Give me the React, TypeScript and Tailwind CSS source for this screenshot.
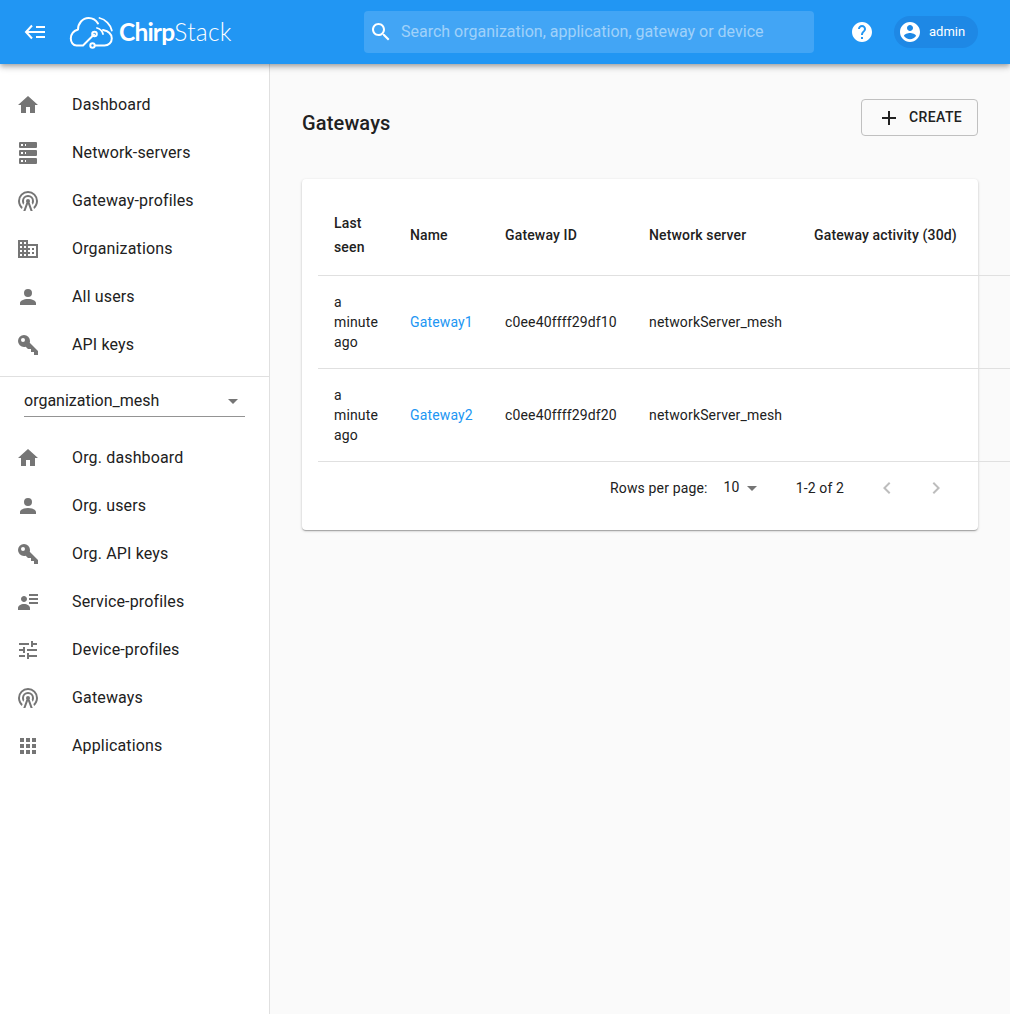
import React from "react";

const P = ({ d, s = 24, c = "" }: { d: string; s?: number; c?: string }) => (
  <svg width={s} height={s} viewBox="0 0 24 24" fill="currentColor" className={c}><path d={d} /></svg>
);

const I = {
  home: "M10,20V14H14V20H19V12H22L12,3L2,12H5V20H10Z",
  server: "M4,1H20A1,1 0 0,1 21,2V6A1,1 0 0,1 20,7H4A1,1 0 0,1 3,6V2A1,1 0 0,1 4,1M4,9H20A1,1 0 0,1 21,10V14A1,1 0 0,1 20,15H4A1,1 0 0,1 3,14V10A1,1 0 0,1 4,9M4,17H20A1,1 0 0,1 21,18V22A1,1 0 0,1 20,23H4A1,1 0 0,1 3,22V18A1,1 0 0,1 4,17M9,5H10V3H9V5M9,13H10V11H9V13M9,21H10V19H9V21M5,3V5H7V3H5M5,11V13H7V11H5M5,19V21H7V19H5Z",
  radio: "M12,10A2,2 0 0,1 14,12C14,12.5 13.82,12.94 13.53,13.29L16.7,22H14.57L12,14.93L9.43,22H7.3L10.47,13.29C10.18,12.94 10,12.5 10,12A2,2 0 0,1 12,10M12,8A4,4 0 0,0 8,12C8,12.5 8.1,13 8.28,13.46L7.4,15.86C6.53,14.81 6,13.47 6,12A6,6 0 0,1 12,6A6,6 0 0,1 18,12C18,13.47 17.47,14.81 16.6,15.86L15.72,13.46C15.9,13 16,12.5 16,12A4,4 0 0,0 12,8M12,4A8,8 0 0,0 4,12C4,14.36 5,16.5 6.64,17.94L5.92,19.94C3.54,18.11 2,15.23 2,12A10,10 0 0,1 12,2A10,10 0 0,1 22,12C22,15.23 20.46,18.11 18.08,19.94L17.36,17.94C19,16.5 20,14.36 20,12A8,8 0 0,0 12,4Z",
  domain: "M18,15H16V17H18M18,11H16V13H18M20,19H12V17H14V15H12V13H14V11H12V9H20M10,7H8V5H10M10,11H8V9H10M10,15H8V13H10M10,19H8V17H10M6,7H4V5H6M6,11H4V9H6M6,15H4V13H6M6,19H4V17H6M12,7V3H2V21H22V7H12Z",
  person: "M12,4A4,4 0 0,1 16,8A4,4 0 0,1 12,12A4,4 0 0,1 8,8A4,4 0 0,1 12,4M12,14C16.42,14 20,15.79 20,18V20H4V18C4,15.79 7.58,14 12,14Z",
  key: "M22,18V22H18V19H15V16H12L9.74,13.74C9.19,13.91 8.61,14 8,14A6,6 0 0,1 2,8A6,6 0 0,1 8,2A6,6 0 0,1 14,8C14,8.61 13.91,9.19 13.74,9.74L22,18M7,5A2,2 0 0,0 5,7A2,2 0 0,0 7,9A2,2 0 0,0 9,7A2,2 0 0,0 7,5Z",
  profiles: "M11,9C11,10.66 9.66,12 8,12C6.34,12 5,10.66 5,9C5,7.34 6.34,6 8,6C9.66,6 11,7.34 11,9M14,20H2V18C2,15.79 4.69,14 8,14C11.31,14 14,15.79 14,18V20M22,12V14H13V12H22M22,8V10H13V8H22M22,4V6H13V4H22Z",
  tune: "M3,17V19H9V17H3M3,5V7H13V5H3M13,21V19H21V17H13V15H11V21H13M7,9V11H3V13H7V15H9V9H7M21,13V11H11V13H21M15,9H17V7H21V5H17V3H15V9Z",
  apps: "M4 8h4V4H4v4zm6 12h4v-4h-4v4zm-6 0h4v-4H4v4zm0-6h4v-4H4v4zm6 0h4v-4h-4v4zm6-10v4h4V4h-4zm-6 4h4V4h-4v4zm6 6h4v-4h-4v4zm0 6h4v-4h-4v4z",
  search: "M15.5 14h-.79l-.28-.27C15.41 12.59 16 11.11 16 9.5 16 5.91 13.09 3 9.5 3S3 5.91 3 9.5 5.91 16 9.5 16c1.61 0 3.09-.59 4.23-1.57l.27.28v.79l5 4.99L20.49 19l-4.99-5zm-6 0C7.01 14 5 11.99 5 9.5S7.01 5 9.5 5 14 7.01 14 9.5 11.99 14 9.5 14z",
  help: "M12 2C6.48 2 2 6.48 2 12s4.48 10 10 10 10-4.48 10-10S17.52 2 12 2zm1 17h-2v-2h2v2zm2.07-7.75l-.9.92C13.45 12.9 13 13.5 13 15h-2v-.5c0-1.1.45-2.1 1.17-2.83l1.24-1.26c.37-.36.59-.86.59-1.41 0-1.1-.9-2-2-2s-2 .9-2 2H8c0-2.21 1.79-4 4-4s4 1.79 4 4c0 .88-.36 1.68-.93 2.25z",
  account: "M12 2C6.48 2 2 6.48 2 12s4.48 10 10 10 10-4.48 10-10S17.52 2 12 2zm0 3c1.66 0 3 1.34 3 3s-1.34 3-3 3-3-1.34-3-3 1.34-3 3-3zm0 14.2c-2.5 0-4.71-1.28-6-3.22.03-1.99 4-3.08 6-3.08 1.99 0 5.97 1.09 6 3.08-1.29 1.94-3.5 3.22-6 3.22z",
  plus: "M19 13h-6v6h-2v-6H5v-2h6V5h2v6h6v2z",
  drop: "M7 10l5 5 5-5z",
  left: "M15.41 7.41L14 6l-6 6 6 6 1.41-1.41L10.83 12z",
  right: "M10 6L8.59 7.41 13.17 12l-4.58 4.59L10 18l6-6z",
};

const MenuBack = () => (
  <svg width="24" height="24" viewBox="0 0 24 24" fill="none" stroke="#fff" strokeWidth="2" className="shrink-0">
    <path d="M8 5.500 2 12 8 18.500" />
    <path d="M3 12H21M12 7H21M12 17H21" />
  </svg>
);

const Nav = ({ d, label }: { d: string; label: string }) => (
  <div className="flex h-12 items-center pl-4 text-[#212121]">
    <span className="flex w-14 shrink-0 text-[#757575]"><P d={d} /></span>
    <span className="text-base leading-6 tracking-[0.15px]">{label}</span>
  </div>
);

const Logo = () => (
  <div className="flex items-center">
    <svg width="48" height="36" viewBox="68 10 48 36" fill="none" stroke="#fff" strokeWidth="2" strokeLinecap="round" strokeLinejoin="round" className="shrink-0">
      <path d="M94 30.500 83 41.500H76.500C73 41.500 70.800 38 70.800 34.500 70.800 30.500 73.500 27 78 25.500 78 19.500 82.500 14 88.500 14 92.500 14 96 16 98 19.500" />
      <path d="M103 26C108 27 111.800 30 111.800 34.500 111.800 38.500 108.500 41.500 104.500 41.500H95" />
      <circle cx="94.500" cy="30" r="2.300" />
      <circle cx="92.500" cy="41.500" r="2.200" />
      <path d="M97 24C100 24.800 102.300 27 103 30" strokeWidth="1.800" />
      <path d="M99.500 14C105.500 15.500 110.500 20.500 111.800 26.500" strokeWidth="1.800" />
    </svg>
    <span className="ml-[3px] text-[24.5px] leading-none text-white [font-family:Lato,sans-serif]">
      <span className="font-bold tracking-[-0.8px]">Chirp</span>
      <span className="font-light tracking-[0.3px]">Stack</span>
    </span>
  </div>
);

const Row = ({ name, id }: { name: string; id: string }) => (
  <tr className="h-[93px] border-b border-[#e0e0e0] text-[#212121]">
    <td className="pl-4 pr-8 leading-5">a minute ago</td>
    <td className="text-[#2196f3]">{name}</td>
    <td>{id}</td>
    <td>networkServer_mesh</td>
    <td />
  </tr>
);

export default function App() {
  return (
    <div className="relative flex min-h-[1014px] flex-col overflow-hidden bg-[#fafafa] text-sm tracking-[0.15px] [font-family:Roboto,sans-serif]">
      <header className="relative z-10 flex h-16 shrink-0 items-center bg-[#2196f3] pl-6 pr-8 shadow-[0_2px_4px_-1px_rgba(0,0,0,0.2),0_4px_5px_0_rgba(0,0,0,0.14),0_1px_10px_0_rgba(0,0,0,0.12)]">
        <MenuBack />
        <div className="ml-5 w-[296px]"><Logo /></div>
        <div className="flex h-[42px] w-[450px] items-center rounded bg-[#42a5f5] pl-[5px]">
          <P d={I.search} c="text-white" />
          <span className="ml-2 text-base leading-6 tracking-normal text-white/50">Search organization, application, gateway or device</span>
        </div>
        <P d={I.help} c="ml-9 text-white" />
        <div className="ml-5 flex h-8 w-[84px] items-center rounded-2xl bg-[#1e88e5] pl-1">
          <P d={I.account} c="text-white" />
          <span className="ml-[7px] text-[13px] tracking-normal text-white">admin</span>
        </div>
      </header>
      <div className="flex flex-1">
        <aside className="w-[270px] shrink-0 border-r border-[#e0e0e0] bg-white pt-[17px]">
          <Nav d={I.home} label="Dashboard" />
          <Nav d={I.server} label="Network-servers" />
          <Nav d={I.radio} label="Gateway-profiles" />
          <Nav d={I.domain} label="Organizations" />
          <Nav d={I.person} label="All users" />
          <Nav d={I.key} label="API keys" />
          <div className="mt-[7px] border-t border-[#e0e0e0] px-6 pb-[17px] pt-[8px]">
            <div className="flex h-8 items-center justify-between border-b border-[#949494] text-base tracking-normal text-[#212121]">
              <span>organization_mesh</span>
              <P d={I.drop} c="text-[#757575]" />
            </div>
          </div>
          <Nav d={I.home} label="Org. dashboard" />
          <Nav d={I.person} label="Org. users" />
          <Nav d={I.key} label="Org. API keys" />
          <Nav d={I.profiles} label="Service-profiles" />
          <Nav d={I.tune} label="Device-profiles" />
          <Nav d={I.radio} label="Gateways" />
          <Nav d={I.apps} label="Applications" />
        </aside>
        <main className="min-w-0 flex-1 px-8 pt-[35px]">
          <div className="flex h-[37px] items-center justify-between">
            <h1 className="mt-[10px] text-xl font-medium text-[#212121]">Gateways</h1>
            <button className="flex h-[37px] w-[117px] items-center rounded border border-[#c0c0c0] pl-[15px] text-sm font-medium leading-[33px] tracking-[0.4px] text-[#212121]">
              <P d={I.plus} />
              <span className="ml-2">CREATE</span>
            </button>
          </div>
          <div className="mt-[43px] h-[351px] rounded bg-white pl-4 pt-4 shadow-[0_1px_3px_0_rgba(0,0,0,0.2),0_1px_1px_0_rgba(0,0,0,0.14),0_2px_1px_-1px_rgba(0,0,0,0.12)]">
            <table className="w-[692px] table-fixed border-collapse text-left text-sm">
              <thead>
                <tr className="h-20 border-b border-[#e0e0e0] text-[#212121]">
                  <th className="w-[92px] pl-4 pr-8 font-medium leading-6">Last seen</th>
                  <th className="w-[95px] font-medium">Name</th>
                  <th className="w-[144px] font-medium">Gateway ID</th>
                  <th className="w-[165px] font-medium">Network server</th>
                  <th className="w-[196px] whitespace-nowrap font-medium">Gateway activity (30d)</th>
                </tr>
              </thead>
              <tbody>
                <Row name="Gateway1" id="c0ee40ffff29df10" />
                <Row name="Gateway2" id="c0ee40ffff29df20" />
              </tbody>
            </table>
            <div className="flex h-[52px] w-[660px] items-center text-[#212121]">
              <span className="ml-[292px]">Rows per page:</span>
              <span className="ml-[16px] -mt-[1px]">10</span>
              <P d={I.drop} c="text-[#757575]" />
              <span className="ml-[32px]">1-2 of 2</span>
              <P d={I.left} c="ml-[31px] text-[#bdbdbd]" />
              <P d={I.right} c="ml-[25px] text-[#bdbdbd]" />
            </div>
          </div>
        </main>
      </div>
    </div>
  );
}
